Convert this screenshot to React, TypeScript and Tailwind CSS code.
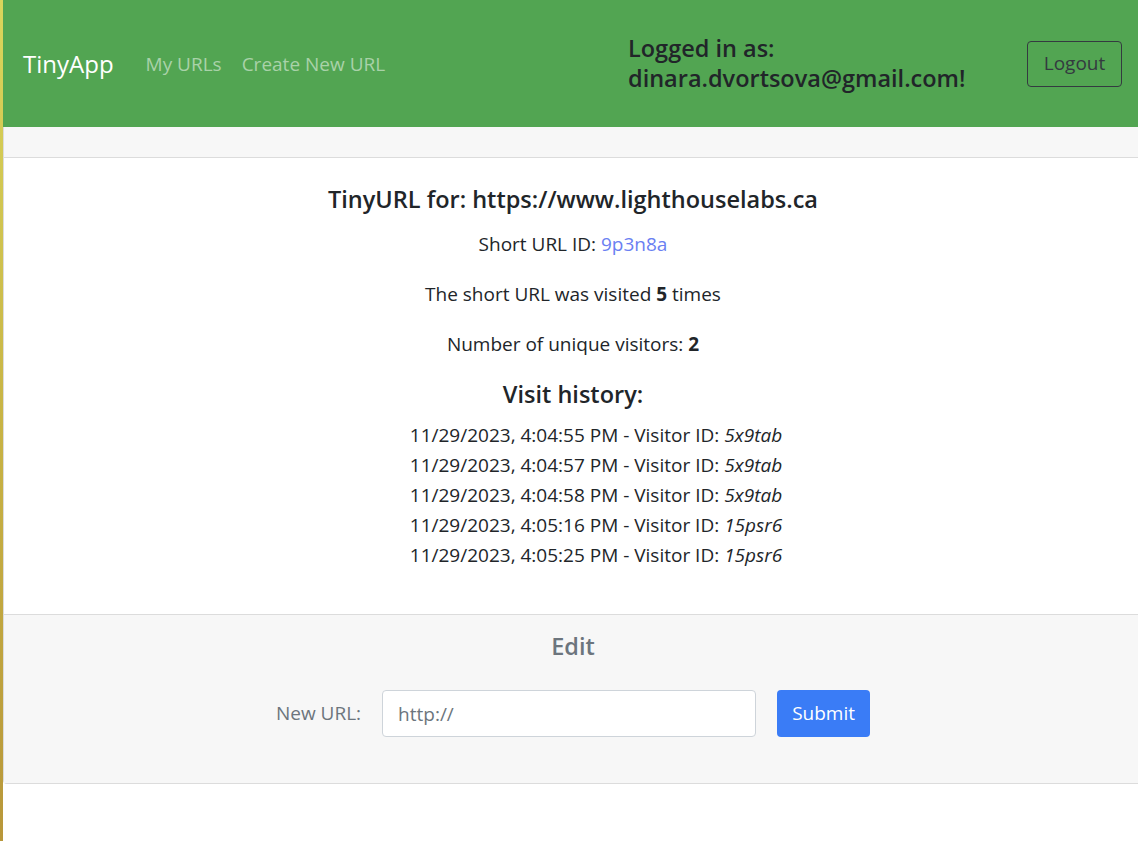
import React from "react";

const visits = [
  ["11/29/2023, 4:04:55 PM", "5x9tab"],
  ["11/29/2023, 4:04:57 PM", "5x9tab"],
  ["11/29/2023, 4:04:58 PM", "5x9tab"],
  ["11/29/2023, 4:05:16 PM", "15psr6"],
  ["11/29/2023, 4:05:25 PM", "15psr6"],
];

export default function App() {
  return (
    <div
      className="flex min-h-[841px] overflow-hidden bg-white text-[#212529]"
      style={{ fontFamily: '"Open Sans", "Noto Sans", sans-serif' }}
    >
      <div className="w-[3px] shrink-0 bg-gradient-to-b from-[#d9d65c] via-[#c8b445] to-[#b8973a]" />
      <div className="min-w-0 flex-1">
        <nav className="flex h-[127px] items-center bg-[#52a552] pl-[20px] pr-[16px]">
          <div className="flex flex-1 items-center">
            <span className="text-[24px] leading-[30px] text-white">TinyApp</span>
            <span className="ml-[32px] text-[19px] leading-[24px] text-[#a9d2a9]">My URLs</span>
            <span className="ml-[20px] text-[19px] leading-[24px] text-[#a9d2a9]">Create New URL</span>
          </div>
          <div className="w-[399px] pb-[2px] text-[23.5px] font-semibold leading-[30px] text-[#212529]">
            Logged in as:
            <br />
            dinara.dvortsova@gmail.com!
          </div>
          <button className="h-[46px] w-[95px] rounded-[4px] border border-[#343a40] text-[19px] text-[#343a40]">
            Logout
          </button>
        </nav>
        <div className="w-[1140px] rounded-b-[4px] border-x border-b border-[#dcdcdc]">
          <div className="h-[31px] border-b border-[#dcdcdc] bg-[#f7f7f7]" />
          <div className="pb-[44px] pt-[27px] text-center">
            <h4 className="text-[23.5px] font-semibold leading-[29px]">
              TinyURL for: https://www.lighthouselabs.ca
            </h4>
            <p className="mt-[18px] text-[19px] leading-[24px]">
              Short URL ID: <span className="text-[#6a80f2]">9p3n8a</span>
            </p>
            <p className="mt-[26px] text-[19px] leading-[24px]">
              The short URL was visited <b>5</b> times
            </p>
            <p className="mt-[26px] text-[19px] leading-[24px]">
              Number of unique visitors: <b>2</b>
            </p>
            <h4 className="mt-[24px] text-[23.5px] font-semibold leading-[29px]">Visit history:</h4>
            <ul className="mt-[11px] pl-[46px]">
              {visits.map(([t, id], i) => (
                <li key={i} className="text-[19px] leading-[30px]">
                  {t} - Visitor ID: <i>{id}</i>
                </li>
              ))}
            </ul>
          </div>
          <div className="border-t border-[#dcdcdc] bg-[#f7f7f7] pb-[46px] pt-[17px]">
            <h4 className="text-center text-[23.5px] font-semibold leading-[29px] text-[#6c757d]">Edit</h4>
            <div className="mt-[29px] flex items-center justify-center">
              <label className="text-[19px] text-[#6c757d]">New URL:</label>
              <input
                className="ml-[21px] h-[47px] w-[374px] rounded-[4px] border border-[#ced4da] bg-white px-[15px] text-[19px] outline-none placeholder:text-[#6c757d]"
                placeholder="http://"
              />
              <button className="ml-[21px] h-[47px] w-[93px] rounded-[4px] bg-[#3a7cf6] text-[19px] text-white">
                Submit
              </button>
            </div>
          </div>
        </div>
      </div>
    </div>
  );
}
